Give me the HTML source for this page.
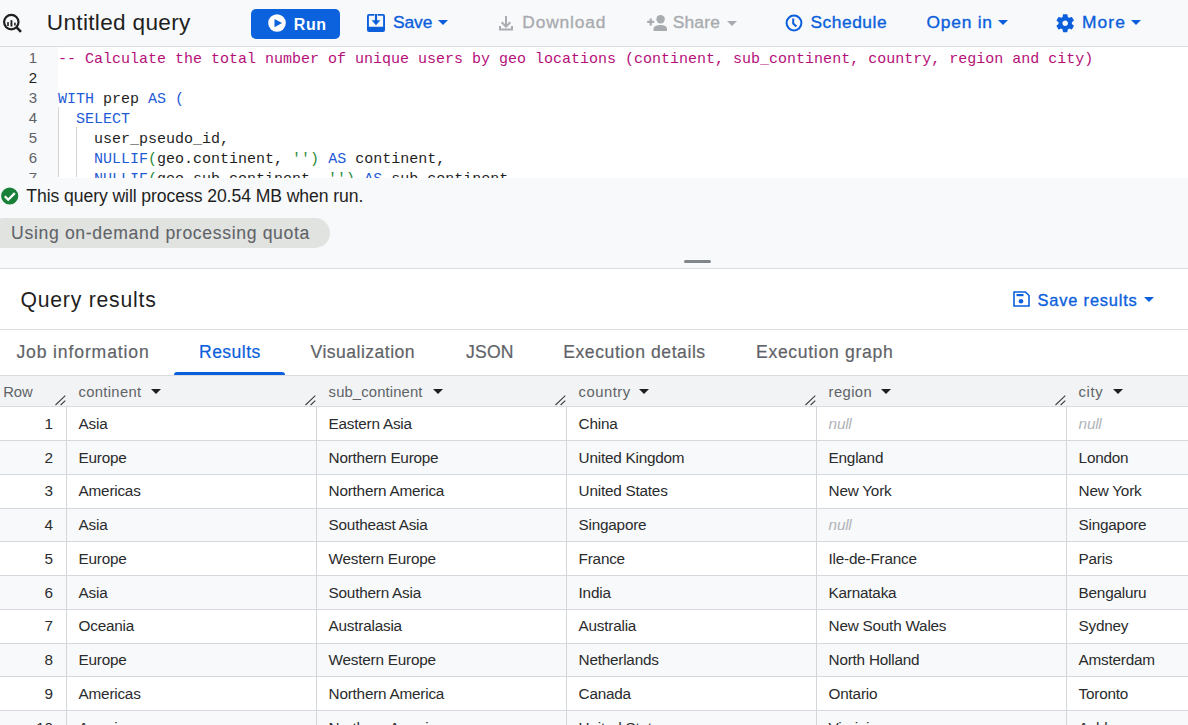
<!DOCTYPE html>
<html><head><meta charset="utf-8">
<style>
*{box-sizing:border-box;margin:0;padding:0}
html,body{width:1188px;height:725px;overflow:hidden;background:#fff;font-family:"Liberation Sans",sans-serif;color:#1f1f1f;position:relative}
.abs{position:absolute}
.t{position:absolute;white-space:nowrap;line-height:1}
.caret{position:absolute;width:0;height:0;border-left:5px solid transparent;border-right:5px solid transparent}
.ln{position:absolute;left:7px;width:30px;text-align:right;font-size:15px;color:#5f6368;line-height:20px}
.code{position:absolute;left:58px;font-family:"Liberation Mono",monospace;font-size:15px;line-height:20px;white-space:pre;color:#1f1f1f}
.cm{color:#b5107a}
.kw{color:#1f5bd6}
.gr{color:#2e8c3a}
.guide{position:absolute;width:1px;background:#d5d5d5}
.row{position:absolute;left:0;width:1188px;border-bottom:1px solid #d5d8dc}
.alt{background:#f8f9fa}
.vline{position:absolute;top:406px;width:1px;height:319px;background:#d3d6da}
</style></head><body>
<div class="abs" style="left:0;top:0;width:1188px;height:47px;background:#f8f9fa;border-bottom:1px solid #dadce0"></div>
<svg class="abs" style="left:0;top:10px" width="26" height="26" viewBox="0 0 26 26">
  <circle cx="11.3" cy="12.1" r="7.2" fill="none" stroke="#1f1f1f" stroke-width="2.2"/>
  <path d="M16.6 17.4 L21 21.8" stroke="#1f1f1f" stroke-width="2.6"/>
  <rect x="10.5" y="10.2" width="1.9" height="6.3" fill="#1f1f1f"/>
  <rect x="7.2" y="12.1" width="1.6" height="3.9" fill="#1f1f1f"/>
  <rect x="14.1" y="12.7" width="1.6" height="2.8" fill="#1f1f1f"/>
</svg>
<div class="t" style="left:46.8px;top:12.0px;font-size:22.6px;color:#1f1f1f;font-weight:normal;letter-spacing:0.32px;">Untitled query</div>
<div class="abs" style="left:251px;top:9px;width:89px;height:30px;background:#0b62dc;border-radius:5px"></div>
<svg class="abs" style="left:268px;top:14px" width="18" height="18" viewBox="0 0 18 18">
  <circle cx="9" cy="9" r="8.8" fill="#fff"/>
  <path d="M6.5 4.9 L14 9.1 L6.5 13.3 Z" fill="#0b62dc"/>
</svg>
<div class="t" style="left:293.7px;top:16.5px;font-size:16px;color:#fff;font-weight:bold;letter-spacing:0.65px;">Run</div>
<svg class="abs" style="left:367px;top:14px" width="18" height="18" viewBox="0 0 18 18">
  <path d="M2 0 H7.3 V1.8 H1.9 V12.8 H16.1 V1.8 H10.7 V0 H16 A2 2 0 0 1 18 2 V16 A2 2 0 0 1 16 18 H2 A2 2 0 0 1 0 16 V2 A2 2 0 0 1 2 0 Z" fill="#0b5fdc"/>
  <path d="M7.9 0 H10.1 V6.2 H13.4 L9 11.2 L4.6 6.2 H7.9 Z" fill="#0b5fdc"/>
</svg>
<div class="t" style="left:392.9px;top:14.2px;font-size:17.4px;color:#0b5fdc;font-weight:normal;letter-spacing:-0.03px;-webkit-text-stroke:0.35px #0b5fdc;">Save</div>
<div class="caret" style="left:438.3px;top:20.2px;border-left-width:5.0px;border-right-width:5.0px;border-top:5px solid #0b5fdc"></div>
<svg class="abs" style="left:498px;top:15px" width="16" height="16" viewBox="0 0 16 16">
  <path d="M7 1 H9 V9.2 L11.6 6.6 L13 8 L8 13 L3 8 L4.4 6.6 L7 9.2 Z" fill="#a8abaf"/>
  <path d="M1 11 H3 V13.5 H13 V11 H15 V15.5 H1 Z" fill="#a8abaf"/>
</svg>
<div class="t" style="left:522.3px;top:14.2px;font-size:17.4px;color:#a8abaf;font-weight:normal;letter-spacing:0.84px;-webkit-text-stroke:0.35px #a8abaf;">Download</div>
<svg class="abs" style="left:646px;top:14px" width="22" height="18" viewBox="0 0 22 18">
  <circle cx="14.6" cy="5.3" r="4.2" fill="#a8abaf"/>
  <path d="M7.5 17 V14.5 C7.5 12 12 11 14.6 11 C17.2 11 21 12 21 14.5 V17 Z" fill="#a8abaf"/>
  <path d="M3.6 4.4 H5.8 V6.8 H8.2 V9 H5.8 V11.4 H3.6 V9 H1.2 V6.8 H3.6 Z" fill="#a8abaf"/>
</svg>
<div class="t" style="left:672.7px;top:14.2px;font-size:17.4px;color:#a8abaf;font-weight:normal;letter-spacing:0.2px;-webkit-text-stroke:0.35px #a8abaf;">Share</div>
<div class="caret" style="left:726.5px;top:20.6px;border-left-width:5.0px;border-right-width:5.0px;border-top:5px solid #a8abaf"></div>
<svg class="abs" style="left:785px;top:14px" width="18" height="18" viewBox="0 0 18 18">
  <circle cx="9" cy="9" r="7.4" fill="none" stroke="#0b5fdc" stroke-width="2"/>
  <path d="M8.2 4.5 V9.6 L11.4 12.6" fill="none" stroke="#0b5fdc" stroke-width="2"/>
</svg>
<div class="t" style="left:810.4px;top:14.2px;font-size:17.4px;color:#0b5fdc;font-weight:normal;letter-spacing:0.53px;-webkit-text-stroke:0.35px #0b5fdc;">Schedule</div>
<div class="t" style="left:926.6px;top:14.2px;font-size:17.4px;color:#0b5fdc;font-weight:normal;letter-spacing:0.75px;-webkit-text-stroke:0.35px #0b5fdc;">Open in</div>
<div class="caret" style="left:998.3px;top:20.2px;border-left-width:5.0px;border-right-width:5.0px;border-top:5px solid #0b5fdc"></div>
<svg class="abs" style="left:1054.3px;top:12.4px" width="22.4" height="22.4" viewBox="0 0 24 24">
  <path fill="#0b5fdc" d="M19.14 12.94c.04-.3.06-.61.06-.94 0-.32-.02-.64-.07-.94l2.03-1.58a.49.49 0 0 0 .12-.61l-1.92-3.32a.488.488 0 0 0-.59-.22l-2.39.96c-.5-.38-1.030-.7-1.62-.94l-.36-2.54a.484.484 0 0 0-.48-.41h-3.84c-.24 0-.43.17-.47.41l-.36 2.54c-.59.24-1.13.57-1.62.94l-2.39-.96c-.22-.08-.47 0-.59.22L2.74 8.87c-.12.21-.08.47.12.61l2.03 1.58c-.05.3-.09.63-.09.94s.02.64.07.94l-2.030 1.58a.49.49 0 0 0-.12.61l1.92 3.32c.12.22.37.29.59.22l2.39-.96c.5.38 1.03.7 1.62.94l.36 2.54c.05.24.24.41.48.41h3.84c.24 0 .44-.17.47-.41l.36-2.54c.59-.24 1.13-.56 1.62-.94l2.39.96c.22.08.47 0 .59-.22l1.920-3.32c.12-.22.07-.47-.12-.61l-2.01-1.58zM12 15c-1.65 0-3-1.35-3-3s1.35-3 3-3 3 1.35 3 3-1.35 3-3 3z"/>
</svg>
<div class="t" style="left:1081.9px;top:14.2px;font-size:17.4px;color:#0b5fdc;font-weight:normal;letter-spacing:1.13px;-webkit-text-stroke:0.35px #0b5fdc;">More</div>
<div class="caret" style="left:1131px;top:20.2px;border-left-width:5.0px;border-right-width:5.0px;border-top:5px solid #0b5fdc"></div>
<div class="abs" style="left:0;top:47px;width:58px;height:131px;background:#f8f9fa"></div>
<div class="ln" style="top:48px;color:#5f6368">1</div>
<div class="ln" style="top:68px;color:#1f1f1f">2</div>
<div class="ln" style="top:88px;color:#5f6368">3</div>
<div class="ln" style="top:108px;color:#5f6368">4</div>
<div class="ln" style="top:128px;color:#5f6368">5</div>
<div class="ln" style="top:148px;color:#5f6368">6</div>
<div class="ln" style="top:168px;color:#5f6368">7</div>
<div class="guide" style="left:58px;top:107px;height:70px"></div>
<div class="guide" style="left:76px;top:127px;height:50px"></div>
<div class="abs" style="left:0;top:47px;width:1188px;height:131px;overflow:hidden">
<div class="code" style="top:3px"><span class="cm">-- Calculate the total number of unique users by geo locations (continent, sub_continent, country, region and city)</span></div>
<div class="code" style="top:43px"><span class="kw">WITH</span> prep <span class="kw">AS</span> <span class="kw">(</span></div>
<div class="code" style="top:63px">  <span class="kw">SELECT</span></div>
<div class="code" style="top:83px">    user_pseudo_id,</div>
<div class="code" style="top:103px">    <span class="kw">NULLIF</span><span class="gr">(</span>geo.continent, <span class="gr">''</span><span class="gr">)</span> <span class="kw">AS</span> continent,</div>
<div class="code" style="top:123px">    <span class="kw">NULLIF</span><span class="gr">(</span>geo.sub_continent, <span class="gr">''</span><span class="gr">)</span> <span class="kw">AS</span> sub_continent,</div>
</div>
<div class="abs" style="left:0;top:178px;width:1188px;height:91px;background:#f8f9fa;border-bottom:1px solid #dadce0"></div>
<svg class="abs" style="left:1px;top:187px" width="18" height="18" viewBox="0 0 18 18">
  <circle cx="8.7" cy="9" r="8.6" fill="#188038"/>
  <path d="M3.8 9.3 L7.2 12.7 L13.8 6.1" fill="none" stroke="#fff" stroke-width="2.3"/>
</svg>
<div class="t" style="left:26.3px;top:187.8px;font-size:17.6px;color:#1f1f1f;font-weight:normal;letter-spacing:-0.08px;">This query will process 20.54 MB when run.</div>
<div class="abs" style="left:-11px;top:218px;width:341px;height:30px;background:#e1e3e1;border-radius:15px"></div>
<div class="t" style="left:11.1px;top:224.9px;font-size:17.6px;color:#5f6368;font-weight:normal;letter-spacing:0.66px;-webkit-text-stroke:0.1px #5f6368;">Using on-demand processing quota</div>
<div class="abs" style="left:684px;top:260px;width:27px;height:3px;border-radius:2px;background:#80868b"></div>
<div class="t" style="left:20.5px;top:289.4px;font-size:21.2px;color:#1f1f1f;font-weight:normal;letter-spacing:0.77px;">Query results</div>
<svg class="abs" style="left:1013px;top:291px" width="17" height="16" viewBox="0 0 17 16">
  <path d="M1 1 H12.5 L16 4.5 V15 H1 Z" fill="none" stroke="#0b5fdc" stroke-width="1.6"/>
  <rect x="3.5" y="3" width="7" height="2.2" fill="#0b5fdc"/>
  <circle cx="8" cy="10.2" r="2.3" fill="#0b5fdc"/>
</svg>
<div class="t" style="left:1037.6px;top:291.6px;font-size:16.4px;color:#0b5fdc;font-weight:normal;letter-spacing:0.82px;-webkit-text-stroke:0.35px #0b5fdc;">Save results</div>
<div class="caret" style="left:1143.5px;top:296.8px;border-left-width:5.0px;border-right-width:5.0px;border-top:5.2px solid #0b5fdc"></div>
<div class="abs" style="left:0;top:329px;width:1188px;height:1px;background:#dadce0"></div>
<div class="t" style="left:16.4px;top:343.9px;font-size:17.6px;color:#5f6368;font-weight:normal;letter-spacing:0.86px;-webkit-text-stroke:0.2px #5f6368;">Job information</div>
<div class="t" style="left:199px;top:343.9px;font-size:17.6px;color:#0b5fdc;font-weight:normal;letter-spacing:0.43px;-webkit-text-stroke:0.2px #0b5fdc;">Results</div>
<div class="t" style="left:310.6px;top:343.9px;font-size:17.6px;color:#5f6368;font-weight:normal;letter-spacing:0.46px;-webkit-text-stroke:0.2px #5f6368;">Visualization</div>
<div class="t" style="left:465.9px;top:343.9px;font-size:17.6px;color:#5f6368;font-weight:normal;letter-spacing:0.23px;-webkit-text-stroke:0.2px #5f6368;">JSON</div>
<div class="t" style="left:563.2px;top:343.9px;font-size:17.6px;color:#5f6368;font-weight:normal;letter-spacing:0.56px;-webkit-text-stroke:0.2px #5f6368;">Execution details</div>
<div class="t" style="left:756px;top:343.9px;font-size:17.6px;color:#5f6368;font-weight:normal;letter-spacing:0.68px;-webkit-text-stroke:0.2px #5f6368;">Execution graph</div>
<div class="abs" style="left:174px;top:372px;width:111px;height:3px;background:#0b5fdc;border-radius:3px 3px 0 0"></div>
<div class="abs" style="left:0;top:375px;width:1188px;height:32px;background:#f1f3f4;border-top:1px solid #dadce0;border-bottom:1px solid #dadce0"></div>
<div class="row" style="top:407px;height:34px"></div>
<div class="row alt" style="top:441px;height:34px"></div>
<div class="row" style="top:475px;height:34px"></div>
<div class="row alt" style="top:509px;height:33px"></div>
<div class="row" style="top:542px;height:34px"></div>
<div class="row alt" style="top:576px;height:34px"></div>
<div class="row" style="top:610px;height:34px"></div>
<div class="row alt" style="top:644px;height:33px"></div>
<div class="row" style="top:677px;height:34px"></div>
<div class="row alt" style="top:711px;height:34px"></div>
<div class="vline" style="left:66px"></div>
<div class="vline" style="left:316px"></div>
<div class="vline" style="left:566px"></div>
<div class="vline" style="left:816px"></div>
<div class="vline" style="left:1066px"></div>
<div class="t" style="left:0;width:53px;text-align:right;top:415.8px;font-size:15.3px;color:#2a2b2d">1</div>
<div class="t" style="left:78.6px;top:415.8px;font-size:15.3px;color:#2a2b2d;font-weight:normal;letter-spacing:-0.22px;">Asia</div>
<div class="t" style="left:328.6px;top:415.8px;font-size:15.3px;color:#2a2b2d;font-weight:normal;letter-spacing:-0.22px;">Eastern Asia</div>
<div class="t" style="left:578.6px;top:415.8px;font-size:15.3px;color:#2a2b2d;font-weight:normal;letter-spacing:-0.22px;">China</div>
<div class="t" style="left:828.6px;top:415.8px;font-size:15.3px;color:#b0b3b8;font-weight:normal;letter-spacing:-0.22px;font-style:italic;">null</div>
<div class="t" style="left:1078.6px;top:415.8px;font-size:15.3px;color:#b0b3b8;font-weight:normal;letter-spacing:-0.22px;font-style:italic;">null</div>
<div class="t" style="left:0;width:53px;text-align:right;top:449.56px;font-size:15.3px;color:#2a2b2d">2</div>
<div class="t" style="left:78.6px;top:449.56px;font-size:15.3px;color:#2a2b2d;font-weight:normal;letter-spacing:-0.22px;">Europe</div>
<div class="t" style="left:328.6px;top:449.56px;font-size:15.3px;color:#2a2b2d;font-weight:normal;letter-spacing:-0.22px;">Northern Europe</div>
<div class="t" style="left:578.6px;top:449.56px;font-size:15.3px;color:#2a2b2d;font-weight:normal;letter-spacing:-0.22px;">United Kingdom</div>
<div class="t" style="left:828.6px;top:449.56px;font-size:15.3px;color:#2a2b2d;font-weight:normal;letter-spacing:-0.22px;">England</div>
<div class="t" style="left:1078.6px;top:449.56px;font-size:15.3px;color:#2a2b2d;font-weight:normal;letter-spacing:-0.22px;">London</div>
<div class="t" style="left:0;width:53px;text-align:right;top:483.32px;font-size:15.3px;color:#2a2b2d">3</div>
<div class="t" style="left:78.6px;top:483.32px;font-size:15.3px;color:#2a2b2d;font-weight:normal;letter-spacing:-0.22px;">Americas</div>
<div class="t" style="left:328.6px;top:483.32px;font-size:15.3px;color:#2a2b2d;font-weight:normal;letter-spacing:-0.22px;">Northern America</div>
<div class="t" style="left:578.6px;top:483.32px;font-size:15.3px;color:#2a2b2d;font-weight:normal;letter-spacing:-0.22px;">United States</div>
<div class="t" style="left:828.6px;top:483.32px;font-size:15.3px;color:#2a2b2d;font-weight:normal;letter-spacing:-0.22px;">New York</div>
<div class="t" style="left:1078.6px;top:483.32px;font-size:15.3px;color:#2a2b2d;font-weight:normal;letter-spacing:-0.22px;">New York</div>
<div class="t" style="left:0;width:53px;text-align:right;top:517.08px;font-size:15.3px;color:#2a2b2d">4</div>
<div class="t" style="left:78.6px;top:517.08px;font-size:15.3px;color:#2a2b2d;font-weight:normal;letter-spacing:-0.22px;">Asia</div>
<div class="t" style="left:328.6px;top:517.08px;font-size:15.3px;color:#2a2b2d;font-weight:normal;letter-spacing:-0.22px;">Southeast Asia</div>
<div class="t" style="left:578.6px;top:517.08px;font-size:15.3px;color:#2a2b2d;font-weight:normal;letter-spacing:-0.22px;">Singapore</div>
<div class="t" style="left:828.6px;top:517.08px;font-size:15.3px;color:#b0b3b8;font-weight:normal;letter-spacing:-0.22px;font-style:italic;">null</div>
<div class="t" style="left:1078.6px;top:517.08px;font-size:15.3px;color:#2a2b2d;font-weight:normal;letter-spacing:-0.22px;">Singapore</div>
<div class="t" style="left:0;width:53px;text-align:right;top:550.84px;font-size:15.3px;color:#2a2b2d">5</div>
<div class="t" style="left:78.6px;top:550.84px;font-size:15.3px;color:#2a2b2d;font-weight:normal;letter-spacing:-0.22px;">Europe</div>
<div class="t" style="left:328.6px;top:550.84px;font-size:15.3px;color:#2a2b2d;font-weight:normal;letter-spacing:-0.22px;">Western Europe</div>
<div class="t" style="left:578.6px;top:550.84px;font-size:15.3px;color:#2a2b2d;font-weight:normal;letter-spacing:-0.22px;">France</div>
<div class="t" style="left:828.6px;top:550.84px;font-size:15.3px;color:#2a2b2d;font-weight:normal;letter-spacing:-0.22px;">Ile-de-France</div>
<div class="t" style="left:1078.6px;top:550.84px;font-size:15.3px;color:#2a2b2d;font-weight:normal;letter-spacing:-0.22px;">Paris</div>
<div class="t" style="left:0;width:53px;text-align:right;top:584.6px;font-size:15.3px;color:#2a2b2d">6</div>
<div class="t" style="left:78.6px;top:584.6px;font-size:15.3px;color:#2a2b2d;font-weight:normal;letter-spacing:-0.22px;">Asia</div>
<div class="t" style="left:328.6px;top:584.6px;font-size:15.3px;color:#2a2b2d;font-weight:normal;letter-spacing:-0.22px;">Southern Asia</div>
<div class="t" style="left:578.6px;top:584.6px;font-size:15.3px;color:#2a2b2d;font-weight:normal;letter-spacing:-0.22px;">India</div>
<div class="t" style="left:828.6px;top:584.6px;font-size:15.3px;color:#2a2b2d;font-weight:normal;letter-spacing:-0.22px;">Karnataka</div>
<div class="t" style="left:1078.6px;top:584.6px;font-size:15.3px;color:#2a2b2d;font-weight:normal;letter-spacing:-0.22px;">Bengaluru</div>
<div class="t" style="left:0;width:53px;text-align:right;top:618.36px;font-size:15.3px;color:#2a2b2d">7</div>
<div class="t" style="left:78.6px;top:618.36px;font-size:15.3px;color:#2a2b2d;font-weight:normal;letter-spacing:-0.22px;">Oceania</div>
<div class="t" style="left:328.6px;top:618.36px;font-size:15.3px;color:#2a2b2d;font-weight:normal;letter-spacing:-0.22px;">Australasia</div>
<div class="t" style="left:578.6px;top:618.36px;font-size:15.3px;color:#2a2b2d;font-weight:normal;letter-spacing:-0.22px;">Australia</div>
<div class="t" style="left:828.6px;top:618.36px;font-size:15.3px;color:#2a2b2d;font-weight:normal;letter-spacing:-0.22px;">New South Wales</div>
<div class="t" style="left:1078.6px;top:618.36px;font-size:15.3px;color:#2a2b2d;font-weight:normal;letter-spacing:-0.22px;">Sydney</div>
<div class="t" style="left:0;width:53px;text-align:right;top:652.12px;font-size:15.3px;color:#2a2b2d">8</div>
<div class="t" style="left:78.6px;top:652.12px;font-size:15.3px;color:#2a2b2d;font-weight:normal;letter-spacing:-0.22px;">Europe</div>
<div class="t" style="left:328.6px;top:652.12px;font-size:15.3px;color:#2a2b2d;font-weight:normal;letter-spacing:-0.22px;">Western Europe</div>
<div class="t" style="left:578.6px;top:652.12px;font-size:15.3px;color:#2a2b2d;font-weight:normal;letter-spacing:-0.22px;">Netherlands</div>
<div class="t" style="left:828.6px;top:652.12px;font-size:15.3px;color:#2a2b2d;font-weight:normal;letter-spacing:-0.22px;">North Holland</div>
<div class="t" style="left:1078.6px;top:652.12px;font-size:15.3px;color:#2a2b2d;font-weight:normal;letter-spacing:-0.22px;">Amsterdam</div>
<div class="t" style="left:0;width:53px;text-align:right;top:685.88px;font-size:15.3px;color:#2a2b2d">9</div>
<div class="t" style="left:78.6px;top:685.88px;font-size:15.3px;color:#2a2b2d;font-weight:normal;letter-spacing:-0.22px;">Americas</div>
<div class="t" style="left:328.6px;top:685.88px;font-size:15.3px;color:#2a2b2d;font-weight:normal;letter-spacing:-0.22px;">Northern America</div>
<div class="t" style="left:578.6px;top:685.88px;font-size:15.3px;color:#2a2b2d;font-weight:normal;letter-spacing:-0.22px;">Canada</div>
<div class="t" style="left:828.6px;top:685.88px;font-size:15.3px;color:#2a2b2d;font-weight:normal;letter-spacing:-0.22px;">Ontario</div>
<div class="t" style="left:1078.6px;top:685.88px;font-size:15.3px;color:#2a2b2d;font-weight:normal;letter-spacing:-0.22px;">Toronto</div>
<div class="t" style="left:0;width:53px;text-align:right;top:719.64px;font-size:15.3px;color:#2a2b2d">10</div>
<div class="t" style="left:78.6px;top:719.64px;font-size:15.3px;color:#2a2b2d;font-weight:normal;letter-spacing:-0.22px;">Americas</div>
<div class="t" style="left:328.6px;top:719.64px;font-size:15.3px;color:#2a2b2d;font-weight:normal;letter-spacing:-0.22px;">Northern America</div>
<div class="t" style="left:578.6px;top:719.64px;font-size:15.3px;color:#2a2b2d;font-weight:normal;letter-spacing:-0.22px;">United States</div>
<div class="t" style="left:828.6px;top:719.64px;font-size:15.3px;color:#2a2b2d;font-weight:normal;letter-spacing:-0.22px;">Virginia</div>
<div class="t" style="left:1078.6px;top:719.64px;font-size:15.3px;color:#2a2b2d;font-weight:normal;letter-spacing:-0.22px;">Ashburn</div>
<div class="t" style="left:3.3px;top:384.5px;font-size:14.8px;color:#5f6368;font-weight:normal;letter-spacing:-0.15px;">Row</div>
<div class="t" style="left:78.6px;top:384.5px;font-size:14.8px;color:#5f6368;font-weight:normal;letter-spacing:0.3px;">continent</div>
<div class="t" style="left:328.6px;top:384.5px;font-size:14.8px;color:#5f6368;font-weight:normal;letter-spacing:0.14px;">sub_continent</div>
<div class="t" style="left:578.6px;top:384.5px;font-size:14.8px;color:#5f6368;font-weight:normal;letter-spacing:0.5px;">country</div>
<div class="t" style="left:828.6px;top:384.5px;font-size:14.8px;color:#5f6368;font-weight:normal;letter-spacing:0.4px;">region</div>
<div class="t" style="left:1078.6px;top:384.5px;font-size:14.8px;color:#5f6368;font-weight:normal;letter-spacing:0.6px;">city</div>
<div class="caret" style="left:151.2px;top:388.8px;border-left-width:5.0px;border-right-width:5.0px;border-top:5.4px solid #1f1f1f"></div>
<div class="caret" style="left:432.7px;top:388.8px;border-left-width:5.0px;border-right-width:5.0px;border-top:5.4px solid #1f1f1f"></div>
<div class="caret" style="left:639.2px;top:388.8px;border-left-width:5.0px;border-right-width:5.0px;border-top:5.4px solid #1f1f1f"></div>
<div class="caret" style="left:880.7px;top:388.8px;border-left-width:5.0px;border-right-width:5.0px;border-top:5.4px solid #1f1f1f"></div>
<div class="caret" style="left:1112.7px;top:388.8px;border-left-width:5.0px;border-right-width:5.0px;border-top:5.4px solid #1f1f1f"></div>
<svg class="abs" style="left:54.8px;top:394px" width="11" height="12" viewBox="0 0 11 12"><path d="M0.5 11 L10.3 1.6 M5.6 11 L10.3 6.6" stroke="#3c4043" stroke-width="1.1"/></svg>
<svg class="abs" style="left:304.8px;top:394px" width="11" height="12" viewBox="0 0 11 12"><path d="M0.5 11 L10.3 1.6 M5.6 11 L10.3 6.6" stroke="#3c4043" stroke-width="1.1"/></svg>
<svg class="abs" style="left:554.8px;top:394px" width="11" height="12" viewBox="0 0 11 12"><path d="M0.5 11 L10.3 1.6 M5.6 11 L10.3 6.6" stroke="#3c4043" stroke-width="1.1"/></svg>
<svg class="abs" style="left:804.8px;top:394px" width="11" height="12" viewBox="0 0 11 12"><path d="M0.5 11 L10.3 1.6 M5.6 11 L10.3 6.6" stroke="#3c4043" stroke-width="1.1"/></svg>
<svg class="abs" style="left:1054.8px;top:394px" width="11" height="12" viewBox="0 0 11 12"><path d="M0.5 11 L10.3 1.6 M5.6 11 L10.3 6.6" stroke="#3c4043" stroke-width="1.1"/></svg>
</body></html>
